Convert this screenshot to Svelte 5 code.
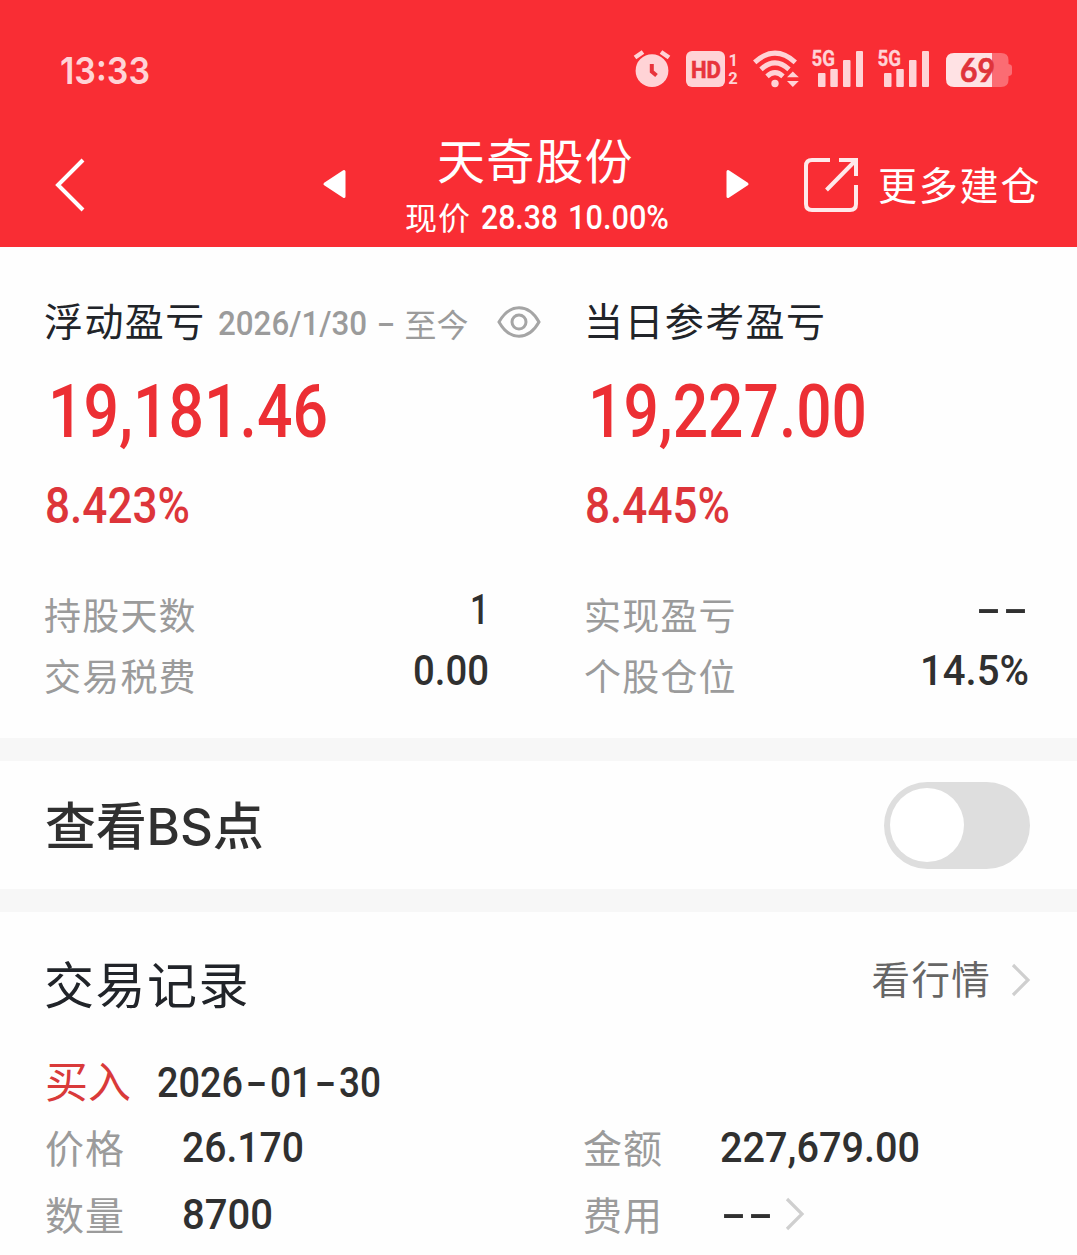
<script>
    const summary = [
        {
            title: "浮动盈亏", range: "2026/1/30", amount: "19,181.46", amountWidth: 280,
            percent: "8.423%", percentWidth: 145,
            stats: [
                { label: "持股天数", value: "1", width: 19 },
                { label: "交易税费", value: "0.00", width: 76 },
            ],
        },
        {
            title: "当日参考盈亏", range: "", amount: "19,227.00", amountWidth: 279,
            percent: "8.445%", percentWidth: 145,
            stats: [
                { label: "实现盈亏", value: "--", width: 54 },
                { label: "个股仓位", value: "14.5%", width: 109 },
            ],
        },
    ];
    const record = [
        { label: "价格", value: "26.170", width: 122 },
        { label: "金额", value: "227,679.00", width: 200 },
        { label: "数量", value: "8700", width: 91 },
        { label: "费用", value: "--", width: 54, more: true },
    ];
    const signals = [1, 2];
    let bsOn = $state(false);
</script>

<!-- figures are set narrower than the face's own width -->
{#snippet num(value, size, width)}
    <svg class="num" {width} height={size}>
        <text class:dash={value[0] === "-"} x="0" y={size * 0.8555} font-size={size} textLength={width} lengthAdjust="spacingAndGlyphs">{value}</text>
    </svg>
{/snippet}

{#snippet chevron()}
    <svg class="chevron" width="20" height="34" viewBox="0 0 20 34">
        <path d="M2 2 L17 17 L2 32" />
    </svg>
{/snippet}

<div class="page">
    <header>
        <div class="status">
            <svg class="time" width="92" height="40"><text x="0" y="34" textLength="90" lengthAdjust="spacingAndGlyphs">13:33</text></svg>
            <svg class="alarm" width="36" height="40" viewBox="634 50 36 40">
                <circle cx="652" cy="70.7" r="16.4" />
                <path class="ear" d="M635 57.5 L643 52 M669 57.5 L661 52" />
                <path class="hand" d="M651.8 64 V71.5 L656.5 75.5" />
            </svg>
            <svg class="hd" width="52" height="40" viewBox="686 50 52 40">
                <rect x="686" y="51" width="39" height="36" rx="6" />
                <text class="cut" x="691" y="77.8" font-size="24" textLength="30" lengthAdjust="spacingAndGlyphs">HD</text>
                <text x="728.5" y="66" font-size="16.5">1</text>
                <text x="728.3" y="84" font-size="16.5">2</text>
            </svg>
            <svg class="wifi" width="46" height="40" viewBox="753 50 46 40">
                <path d="M754.7 62.3 Q775 44 795.3 62.3 M761 69.3 Q775 56.5 789 69.3 M767 76.3 Q775 69 783 76.3" />
                <circle cx="775" cy="83.5" r="3.7" />
                <polygon points="792.8,71.5 787,77.3 798.8,77.3" />
                <polygon points="792.8,87 787,81 798.8,81" />
            </svg>
            {#each signals as s}
                <svg class="signal" width="51" height="40" viewBox="812 50 51 40">
                    <text x="811.5" y="66" font-size="22" textLength="23.5" lengthAdjust="spacingAndGlyphs">5G</text>
                    <rect x="818" y="73" width="7.5" height="14" rx="1" />
                    <rect x="830.3" y="69" width="7.5" height="18" rx="1" />
                    <rect x="843" y="60" width="7.5" height="27" rx="1" />
                    <rect x="856" y="51" width="7" height="36" rx="1" />
                </svg>
            {/each}
            <svg class="battery" width="66" height="40" viewBox="946 50 66 40">
                <path class="rest" d="M992 53 H1001 Q1008.5 53 1008.5 60 V64 Q1012 64.5 1012 67 V73 Q1012 75.5 1008.5 76 V80 Q1008.5 87 1001 87 H992 Z" />
                <path class="level" d="M992 53 H954 Q946 53 946 61 V79 Q946 87 954 87 H992 Z" />
                <text x="960" y="81.5" font-size="31.5" textLength="35" lengthAdjust="spacingAndGlyphs">69</text>
            </svg>
        </div>
        <nav>
            <svg class="back" width="32" height="56" viewBox="0 0 32 56"><path d="M29 3 L4 28 L29 53" /></svg>
            <svg class="tri prev" width="26" height="32" viewBox="0 0 26 32"><path d="M3 16 L22 3.5 V28.5 Z" /></svg>
            <div class="stock">
                <h1>天奇股份</h1>
                <div class="price"><span>现价</span>{@render num("28.38", 33, 77)}{@render num("10.00%", 33, 101)}</div>
            </div>
            <svg class="tri next" width="26" height="32" viewBox="0 0 26 32"><path d="M23 16 L4 3.5 V28.5 Z" /></svg>
            <svg class="open" width="54" height="54" viewBox="0 0 54 54">
                <path d="M26 2 H8 Q2 2 2 8 V46 Q2 52 8 52 H46 Q52 52 52 46 V27 M35 2 H52 V18 M51 3 L22.5 32" />
            </svg>
            <span class="more">更多建仓</span>
        </nav>
    </header>

    <section class="summary">
        {#each summary as col}
            <div class="col">
                <div class="title">
                    <h2>{col.title}</h2>
                    {#if col.range}
                        <div class="range">
                            {@render num(col.range, 33, 149)}
                            {@render num("-", 33, 20)}
                            <span>至今</span>
                        </div>
                        <svg class="eye" width="44" height="32" viewBox="0 0 44 32">
                            <path d="M2 16 Q10 1.8 22 1.8 Q34 1.8 42 16 Q34 30.2 22 30.2 Q10 30.2 2 16 Z" />
                            <circle cx="22" cy="16" r="7" />
                        </svg>
                    {/if}
                </div>
                <div class="amount">{@render num(col.amount, 73.5, col.amountWidth)}</div>
                <div class="percent">{@render num(col.percent, 49.5, col.percentWidth)}</div>
                {#each col.stats as stat}
                    <div class="stat">
                        <span>{stat.label}</span>
                        {@render num(stat.value, 42, stat.width)}
                    </div>
                {/each}
            </div>
        {/each}
    </section>

    <section class="bs">
        <h2>查看BS点</h2>
        <button class="toggle" class:on={bsOn} aria-label="查看BS点" onclick={() => (bsOn = !bsOn)}><b></b></button>
    </section>

    <section class="records">
        <div class="head">
            <h2>交易记录</h2>
            <div class="link"><span>看行情</span>{@render chevron()}</div>
        </div>
        <div class="trade">
            <span>买入</span>
            {@render num("2026", 42, 86)}
            {@render num("-", 42, 23)}
            {@render num("01", 42, 42)}
            {@render num("-", 42, 23)}
            {@render num("30", 42, 42)}
        </div>
        <div class="details">
            {#each record as item}
                <div class="item">
                    <span>{item.label}</span>
                    {@render num(item.value, 42, item.width)}
                    {#if item.more}{@render chevron()}{/if}
                </div>
            {/each}
        </div>
    </section>
</div>

<style>
    :global(body) {
        background: #fefefe;
    }
    .page {
        width: 1077px;
        height: 1255px;
        overflow: hidden;
        background: #fefefe;
        font-family: "Noto Sans CJK SC", sans-serif;
        color: #303030;
    }
    h1, h2 {
        margin: 0;
        font-weight: 400;
        white-space: nowrap;
    }
    svg {
        display: block;
        flex: none;
        fill: none;
        overflow: visible;
    }
    span {
        white-space: nowrap;
    }
    .num {
        fill: currentColor;
        font-family: Roboto, sans-serif;
        font-weight: 500;
        letter-spacing: 0;
    }
    .dash {
        font-family: Inter, sans-serif;
    }
    header {
        height: 247px;
        background: #f92d34;
        color: #fff;
    }
    .status {
        display: flex;
        height: 90px;
        padding: 50px 65px 0 60px;
        box-sizing: border-box;
    }
    .status svg {
        fill: #ffd3d6;
        font-family: Roboto, sans-serif;
        font-weight: 700;
    }
    .status .time {
        margin-right: auto;
        font-family: Inter, sans-serif;
        font-size: 37px;
        font-weight: 600;
    }
    .alarm .ear {
        stroke: #ffd3d6;
        stroke-width: 4.5;
    }
    .alarm .hand {
        fill: none;
        stroke: #e8343b;
        stroke-width: 4;
    }
    .hd {
        margin-left: 16px;
    }
    .hd .cut {
        fill: #e8343b;
        stroke: #e8343b;
        stroke-width: 0.6;
    }
    .wifi {
        margin: 0 13px 0 15px;
    }
    .wifi path {
        fill: none;
        stroke: #ffd3d6;
        stroke-width: 5;
    }
    .signal {
        margin-right: 15px;
    }
    .signal text {
        stroke: #ffd3d6;
        stroke-width: 0.3;
    }
    .battery {
        margin-left: 2px;
    }
    .battery .rest {
        fill: #fb6c73;
    }
    .battery .level {
        fill: #ffe2e4;
    }
    .battery text {
        fill: #e0343b;
        font-family: Lato, sans-serif;
        font-weight: 700;
        stroke: #e0343b;
        stroke-width: 0.6;
    }
    nav {
        display: flex;
        align-items: center;
        height: 157px;
        padding: 0 0 0 54px;
        box-sizing: border-box;
    }
    .back, .open {
        stroke: #fff;
        stroke-width: 4;
        margin-top: 32px;
    }
    .tri {
        fill: #fff;
        stroke: #fff;
        stroke-width: 3;
        stroke-linejoin: round;
        margin-top: 31px;
    }
    .prev {
        margin-left: 236px;
    }
    .stock {
        width: 270px;
        margin: 0 49px 0 57px;
        padding-top: 43px;
        height: 157px;
        box-sizing: border-box;
    }
    h1 {
        padding-left: 32px;
        font-size: 48px;
        line-height: 50px;
        letter-spacing: 1.2px;
    }
    .price {
        display: flex;
        align-items: center;
        height: 68px;
        gap: 10px;
        font-size: 32px;
        letter-spacing: 1px;
    }
    .price span {
        line-height: 56px;
        margin-top: -3px;
    }
    .open {
        margin-left: 54px;
        stroke: #ffe9ea;
    }
    .more {
        margin: 29px 0 0 20px;
        font-size: 39px;
        letter-spacing: 1.8px;
    }
    .summary {
        display: grid;
        grid-template-columns: 444px 444px;
        column-gap: 96px;
        height: 491px;
        padding: 46px 45px 0;
        box-sizing: border-box;
    }
    .title, .amount, .percent, .stat, .item, .trade, .head, .link, .range {
        display: flex;
        align-items: center;
    }
    .title {
        height: 60px;
        width: 500px;
    }
    .title h2 {
        color: #212429;
        font-size: 39px;
        letter-spacing: 1.4px;
        line-height: 56px;
        margin: -8px 0 0 -1px;
    }
    .range {
        gap: 9px;
        margin-left: 12px;
        color: #9b9b9b;
        font-size: 32px;
    }
    .range span {
        line-height: 40px;
    }
    .eye {
        stroke: #a5a5a5;
        stroke-width: 3;
        margin: -3px 0 0 28px;
    }
    .amount {
        height: 115px;
        margin-left: 3px;
        color: #ec2f34;
    }
    .percent {
        height: 75px;
        margin-bottom: 35px;
        color: #dd353a;
    }
    .stat {
        justify-content: space-between;
        height: 61px;
    }
    .stat span, .item span {
        color: #9b9b9b;
        font-size: 37px;
        letter-spacing: 1px;
        line-height: 50px;
    }
    .stat span {
        margin: 10px 0 0 -1px;
        letter-spacing: 1.2px;
    }
    .bs {
        display: flex;
        align-items: center;
        justify-content: space-between;
        height: 128px;
        padding: 0 47px 0 45px;
        border: solid #f7f7f7;
        border-width: 23px 0;
    }
    .bs h2 {
        font-family: Inter, "Noto Sans CJK SC", sans-serif;
        font-size: 51px;
        font-weight: 500;
        line-height: 70px;
        letter-spacing: -0.2px;
        margin-top: 4px;
    }
    .toggle {
        width: 146px;
        height: 87px;
        padding: 6px;
        border: 0;
        border-radius: 44px;
        background: #dedede;
    }
    .toggle b {
        display: block;
        width: 74px;
        height: 74px;
        border-radius: 50%;
        background: #fff;
    }
    .toggle.on {
        background: #ec2f34;
    }
    .toggle.on b {
        margin-left: auto;
    }
    .records {
        padding: 35px 45px 0;
    }
    .head {
        justify-content: space-between;
        height: 70px;
    }
    .head h2 {
        color: #212429;
        font-size: 50px;
        letter-spacing: 1.5px;
        line-height: 70px;
        margin-left: -1px;
    }
    .link {
        color: #666;
        font-size: 38.5px;
        letter-spacing: 1.3px;
        margin: -11px 1px 0 0;
    }
    .link .chevron {
        margin: 6px 0 0 20px;
    }
    .chevron {
        stroke: #cfcfcf;
        stroke-width: 3.2;
    }
    .trade {
        gap: 2px;
        height: 64px;
        margin-top: 33px;
    }
    .trade span {
        width: 110px;
        color: #d93a3a;
        font-size: 43px;
        line-height: 60px;
        margin-top: -6px;
    }
    .details {
        display: grid;
        grid-template-columns: 538px 1fr;
        grid-auto-rows: 67px;
        margin-top: -1px;
    }
    .item span {
        width: 137px;
        font-size: 39px;
        margin-top: -2px;
    }
    .item .chevron {
        margin-left: 11px;
    }
</style>
